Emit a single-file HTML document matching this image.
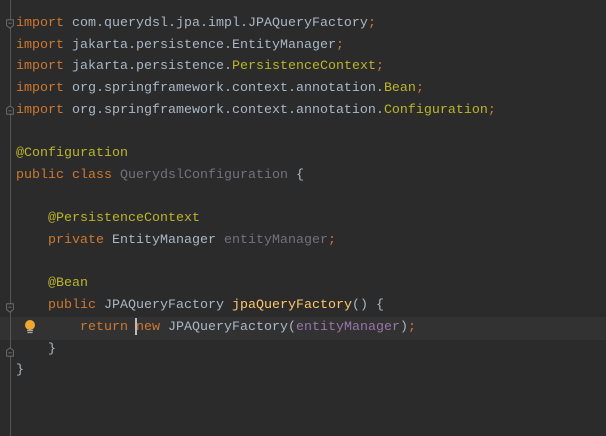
<!DOCTYPE html>
<html><head><style>
html,body{margin:0;padding:0;}
body{width:606px;height:436px;background:#2b2b2b;position:relative;overflow:hidden;font-family:"Liberation Mono",monospace;font-size:13.33px;}
.gl{position:absolute;left:10px;top:0;width:1px;height:436px;background:#555;}
.hl{position:absolute;left:0;top:317px;width:606px;height:23px;background:#323232;}
.code{position:absolute;left:16px;top:13px;white-space:pre;line-height:21.7px;color:#a9b7c6;}
.k{color:#cc7832}.a{color:#bbb529}.g{color:#72737a}.f{color:#9876aa}.m{color:#ffc66d}
.fold{position:absolute;left:5px;width:10px;height:10px;}
.cur{display:inline-block;width:2px;height:17px;background:#bbb;vertical-align:middle;margin-right:-2px;position:relative;left:-1px}
</style></head><body>
<div class="hl"></div>
<div class="gl"></div>
<svg class="fold" style="top:19px" viewBox="0 0 10 12"><path d="M1 1H9V8L5 11L1 8Z" fill="#2b2b2b" stroke="#777"/><path d="M3 5H7" stroke="#777"/></svg>
<svg class="fold" style="top:105px" viewBox="0 0 10 12"><path d="M1 11H9V4L5 1L1 4Z" fill="#2b2b2b" stroke="#777"/><path d="M3 7H7" stroke="#777"/></svg>
<svg class="fold" style="top:303px" viewBox="0 0 10 12"><path d="M1 1H9V8L5 11L1 8Z" fill="#2b2b2b" stroke="#777"/><path d="M3 5H7" stroke="#777"/></svg>
<svg class="fold" style="top:347px" viewBox="0 0 10 12"><path d="M1 11H9V4L5 1L1 4Z" fill="#2b2b2b" stroke="#777"/><path d="M3 7H7" stroke="#777"/></svg>
<svg style="position:absolute;left:23px;top:319px" width="14" height="16" viewBox="0 0 14 16"><circle cx="7" cy="6" r="5" fill="#f0a732"/><path d="M4 11.5H10M4.5 13.5H9.5" stroke="#aaa" stroke-width="1.2"/></svg>
<div class="code"><span class="k">import</span> com.querydsl.jpa.impl.JPAQueryFactory<span class="k">;</span>
<span class="k">import</span> jakarta.persistence.EntityManager<span class="k">;</span>
<span class="k">import</span> jakarta.persistence.<span class="a">PersistenceContext</span><span class="k">;</span>
<span class="k">import</span> org.springframework.context.annotation.<span class="a">Bean</span><span class="k">;</span>
<span class="k">import</span> org.springframework.context.annotation.<span class="a">Configuration</span><span class="k">;</span>

<span class="a">@Configuration</span>
<span class="k">public class</span> <span class="g">QuerydslConfiguration</span> {

    <span class="a">@PersistenceContext</span>
    <span class="k">private</span> EntityManager <span class="g">entityManager</span><span class="k">;</span>

    <span class="a">@Bean</span>
    <span class="k">public</span> JPAQueryFactory <span class="m">jpaQueryFactory</span>() {
        <span class="k">return</span> <span class="cur"></span><span class="k">new</span> JPAQueryFactory(<span class="f">entityManager</span>)<span class="k">;</span>
    }
}</div>
</body></html>
